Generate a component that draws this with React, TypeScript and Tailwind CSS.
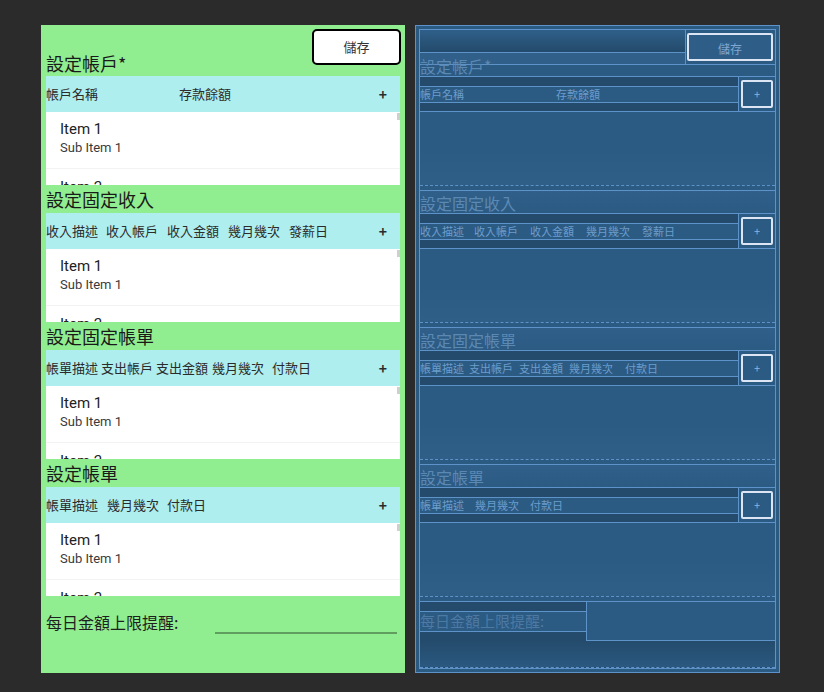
import React from "react";

type Col = { label: string; w: string };

const sections: { title: string; cols: Col[]; bp: Col[] }[] = [
  {
    title: "設定固定收入",
    cols: [
      { label: "收入描述", w: "w-[60px]" },
      { label: "收入帳戶", w: "w-[61px]" },
      { label: "收入金額", w: "w-[61px]" },
      { label: "幾月幾次", w: "w-[61px]" },
      { label: "發薪日", w: "w-[60px]" },
    ],
    bp: [
      { label: "收入描述", w: "w-[54px]" },
      { label: "收入帳戶", w: "w-[56px]" },
      { label: "收入金額", w: "w-[56px]" },
      { label: "幾月幾次", w: "w-[56px]" },
      { label: "發薪日", w: "w-[50px]" },
    ],
  },
  {
    title: "設定固定帳單",
    cols: [
      { label: "帳單描述", w: "w-[55px]" },
      { label: "支出帳戶", w: "w-[55px]" },
      { label: "支出金額", w: "w-[56px]" },
      { label: "幾月幾次", w: "w-[60px]" },
      { label: "付款日", w: "w-[60px]" },
    ],
    bp: [
      { label: "帳單描述", w: "w-[49px]" },
      { label: "支出帳戶", w: "w-[50px]" },
      { label: "支出金額", w: "w-[50px]" },
      { label: "幾月幾次", w: "w-[56px]" },
      { label: "付款日", w: "w-[50px]" },
    ],
  },
  {
    title: "設定帳單",
    cols: [
      { label: "帳單描述", w: "w-[61px]" },
      { label: "幾月幾次", w: "w-[60px]" },
      { label: "付款日", w: "w-[60px]" },
    ],
    bp: [
      { label: "帳單描述", w: "w-[55px]" },
      { label: "幾月幾次", w: "w-[55px]" },
      { label: "付款日", w: "w-[50px]" },
    ],
  },
];

const firstCols: Col[] = [
  { label: "帳戶名稱", w: "w-[133px]" },
  { label: "存款餘額", w: "w-[80px]" },
];
const firstBp: Col[] = [
  { label: "帳戶名稱", w: "w-[136px]" },
  { label: "存款餘額", w: "w-[80px]" },
];

function HeaderRow({ cols }: { cols: Col[] }) {
  return (
    <div className="h-[36px] shrink-0 bg-[#afeeee] flex items-center text-[13px] text-[#2b2b2b]">
      {cols.map((c) => (
        <span key={c.label} className={`${c.w} shrink-0 whitespace-nowrap`}>
          {c.label}
        </span>
      ))}
      <span className="ml-auto mr-[13px] font-bold text-[14px]">+</span>
    </div>
  );
}

function ItemList() {
  return (
    <div className="relative h-[73px] shrink-0 bg-white overflow-hidden font-['Roboto',sans-serif]">
      <div className="h-[57px] pl-[14px] pt-[7px] border-b border-[#f3f3f3]">
        <div className="text-[15px] leading-[20px] text-[#222]">Item 1</div>
        <div className="text-[13px] leading-[18px] text-[#3a3a3a]">Sub Item 1</div>
      </div>
      <div className="pl-[14px] pt-[8px] text-[15px] leading-[20px] text-[#222]">Item 2</div>
      <div className="absolute right-0 top-[1px] w-[3px] h-[7px] bg-[#cfcfcf]" />
    </div>
  );
}

function DesignPanel() {
  return (
    <div className="w-[364px] h-[648px] bg-[#90ee90] px-[5px] pt-[4px] flex flex-col">
      <div className="h-[47px] flex justify-between">
        <div className="self-end text-[18px] leading-[26px] text-[#1a1a1a]">設定帳戶*</div>
        <button className="w-[89px] h-[36px] -mr-[1px] bg-white border-2 border-black rounded-[5px] text-[13px] text-[#333]">
          儲存
        </button>
      </div>
      <HeaderRow cols={firstCols} />
      <ItemList />
      {sections.map((s) => (
        <React.Fragment key={s.title}>
          <div className="h-[28px] shrink-0 flex items-center text-[18px] leading-[26px] text-[#1a1a1a]">
            {s.title}
          </div>
          <HeaderRow cols={s.cols} />
          <ItemList />
        </React.Fragment>
      ))}
      <div className="mt-[14px] flex items-end">
        <div className="w-[169px] text-[16px] leading-[24px] text-[#1f1f1f]">每日金額上限提醒:</div>
        <div className="w-[182px] h-[14px] border-b-2 border-[#5f9e5f]" />
      </div>
    </div>
  );
}

function BpHeader({ cols }: { cols: Col[] }) {
  return (
    <div className="h-[36px] shrink-0 flex border-y border-[#5e93c9]">
      <div className="flex-1 flex flex-col">
        <div className="h-[9px] bg-[#244b6c]" />
        <div className="h-[17px] border-y border-[#5e93c9] flex items-center text-[11px] text-[#6d9dcc]">
          {cols.map((c) => (
            <span key={c.label} className={`${c.w} shrink-0 whitespace-nowrap`}>
              {c.label}
            </span>
          ))}
        </div>
        <div className="flex-1 bg-[#244b6c]" />
      </div>
      <div className="w-[37px] border-l border-[#5e93c9] flex items-center justify-center">
        <div className="w-[32px] h-[28px] border-2 border-[#dbe5f3] rounded-[2px] flex items-center justify-center text-[11px] text-[#8fb3d9]">
          +
        </div>
      </div>
    </div>
  );
}

function BpList() {
  return (
    <div className="h-[74px] shrink-0 border-b border-dashed border-[#5e93c9] bg-gradient-to-b from-[#2b5a83] via-[#2b5a83] to-[#2f5e87]" />
  );
}

function BpTitle({ title }: { title: string }) {
  return (
    <div className="h-[23px] mt-[4px] shrink-0 border-t border-[#5e93c9] flex items-end bg-gradient-to-b from-[#30608a] to-[#2b5a83]">
      <span className="text-[16px] leading-[20px] text-[#5c89b4]">{title}</span>
    </div>
  );
}

function BlueprintPanel() {
  return (
    <div className="w-[365px] h-[648px] border border-[#5e93c9] bg-[#2b5a83] p-[3px]">
      <div className="h-full border border-[#5e93c9] flex flex-col">
        <div className="h-[34px] shrink-0 flex">
          <div className="flex-1 flex flex-col">
            <div className="h-[22px] bg-gradient-to-b from-[#2f5f89] to-[#234a6b]" />
            <div className="flex-1 border-t border-[#5e93c9] bg-[#305f89]" />
          </div>
          <div className="w-[90px] border-l border-[#5e93c9] pl-[1px] pt-[3px]">
            <div className="w-[86px] h-[28px] border-2 border-[#dbe5f3] rounded-[2px] flex items-end justify-center pb-[3px] text-[12px] leading-[14px] text-[#7da7d2] bg-[#2e5e88]">
              儲存
            </div>
          </div>
        </div>
        <div className="h-[12px] shrink-0 border-t border-[#5e93c9] flex items-end">
          <span className="text-[16px] leading-[20px] text-[#5c89b4]">設定帳戶*</span>
        </div>
        <BpHeader cols={firstBp} />
        <BpList />
        {sections.map((s) => (
          <React.Fragment key={s.title}>
            <BpTitle title={s.title} />
            <BpHeader cols={s.bp} />
            <BpList />
          </React.Fragment>
        ))}
        <div className="mt-[4px] h-[40px] shrink-0 flex border-t border-[#5e93c9]">
          <div className="w-[166px] flex flex-col">
            <div className="h-[9px] bg-[#244b6c]" />
            <div className="h-[21px] border-y border-[#5e93c9] flex items-center text-[15px] text-[#4d79a3] whitespace-nowrap">
              每日金額上限提醒:
            </div>
            <div className="flex-1 bg-[#244b6c]" />
          </div>
          <div className="flex-1 border-l border-b border-[#5e93c9] bg-[#2b5a83]" />
        </div>
        <div className="flex-1 bg-gradient-to-b from-[#244b6c] to-[#2a5880] border-b border-dashed border-[#5e93c9]" />
      </div>
    </div>
  );
}

export default function App() {
  return (
    <div className="w-[824px] h-[692px] bg-[#2b2b2b] flex pl-[41px] pt-[25px] gap-[10px] font-['Noto_Sans_CJK_TC','Noto_Sans',sans-serif]">
      <DesignPanel />
      <BlueprintPanel />
    </div>
  );
}
